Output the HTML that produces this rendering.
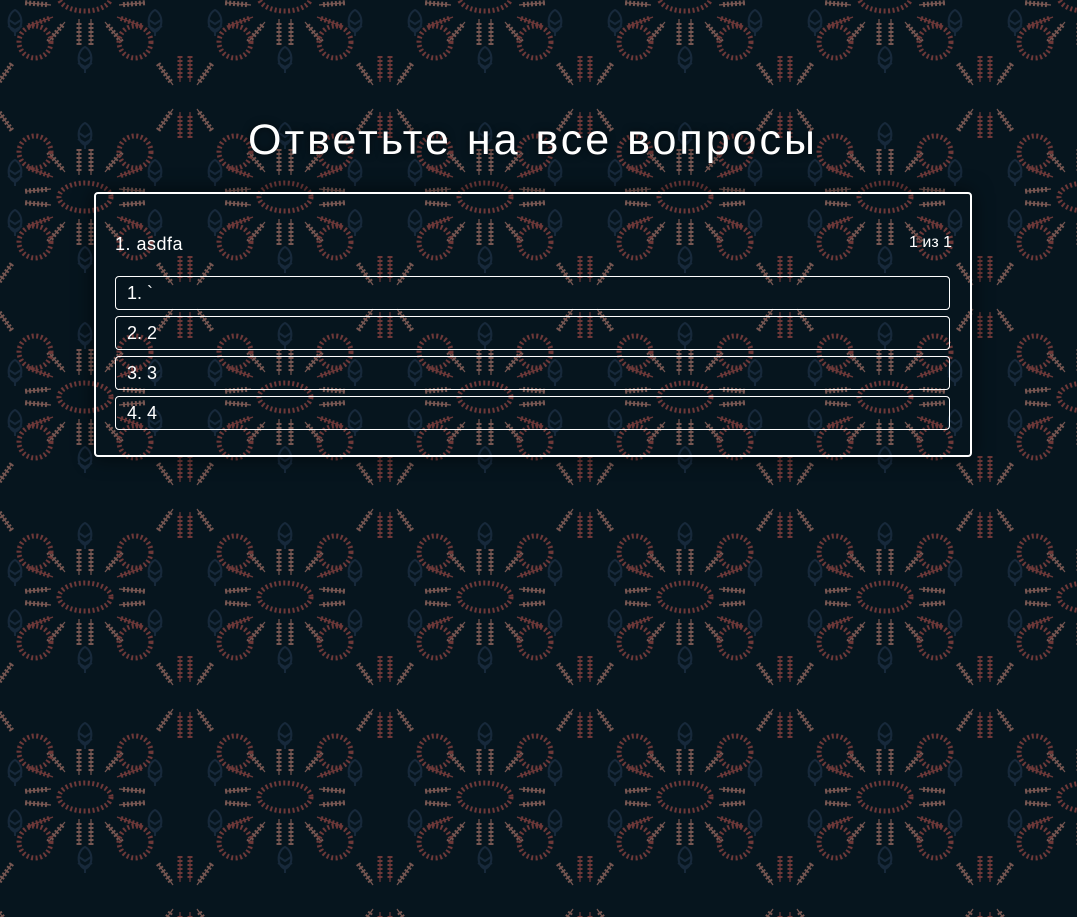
<!DOCTYPE html>
<html><head><meta charset="utf-8"><style>
html,body{margin:0;width:1077px;height:917px;overflow:hidden;background:#06151e;font-family:"Liberation Sans",sans-serif;color:#fff}
svg.bg{position:absolute;left:0;top:0}
h1{position:absolute;left:0;width:1066px;top:116px;margin:0;text-align:center;font-weight:normal;font-size:43px;letter-spacing:3px;text-shadow:0 0 8px rgba(0,0,0,.6)}
.card{position:absolute;left:94px;top:192px;width:874px;height:261px;border:2px solid #fff;border-radius:4px;box-shadow:0 0 20px rgba(0,0,0,.6)}
.q{position:absolute;left:19px;top:40px;font-size:18px;letter-spacing:.5px}
.n{position:absolute;right:18px;top:40px;font-size:16px}
.o{position:absolute;left:19px;height:32px;border:1px solid #fff;border-radius:4px;font-size:18px;line-height:32px;padding-left:11px;width:822px}
</style></head><body>
<svg class="bg" width="1077" height="917">
<defs>
<g id="w"><line x1="0" y1="0" x2="0" y2="-26" stroke-width="1.2"/><line x1="0" y1="-4" x2="0" y2="-26" stroke-width="5" stroke-dasharray="2 2"/></g>
<g id="h" fill="none" stroke="#23364d" stroke-width="2"><path d="M0,-12 C8,-8 9,6 0,10 C-9,6 -8,-8 0,-12Z M-6,-2 L0,2 L6,-2 M-7,4 L0,8 L7,4 M0,10 L0,14"/></g>
<pattern id="p" x="-15" y="97" width="200" height="200" patternUnits="userSpaceOnUse">
<rect width="200" height="200" fill="#06151e"/>
<g opacity="0.6">
<g transform="translate(100,100)">
<ellipse rx="26" ry="14" fill="none" stroke="#b24f48" stroke-width="5" stroke-dasharray="2 2.5"/>
<g stroke="#c48474"><use href="#w" transform="translate(-6,-22)"/><use href="#w" transform="translate(6,-22)"/><use href="#w" transform="translate(-6,22) rotate(180)"/><use href="#w" transform="translate(6,22) rotate(180)"/>
<use href="#w" transform="translate(-20,-25) rotate(-40)"/><use href="#w" transform="translate(20,-25) rotate(40)"/><use href="#w" transform="translate(-20,25) rotate(-140)"/><use href="#w" transform="translate(20,25) rotate(140)"/>
<use href="#w" transform="translate(-34,-8) rotate(-95)"/><use href="#w" transform="translate(34,-8) rotate(95)"/><use href="#w" transform="translate(-34,8) rotate(-85)"/><use href="#w" transform="translate(34,8) rotate(85)"/></g>
<g stroke="#b24f48"><use href="#w" transform="translate(-32,-20) rotate(-70)"/><use href="#w" transform="translate(32,-20) rotate(70)"/><use href="#w" transform="translate(-32,20) rotate(-110)"/><use href="#w" transform="translate(32,20) rotate(110)"/></g>
<use href="#h" transform="translate(0,-62)"/><use href="#h" transform="translate(0,62)"/><use href="#h" transform="translate(-70,-25)"/><use href="#h" transform="translate(70,-25)"/><use href="#h" transform="translate(-70,25)"/><use href="#h" transform="translate(70,25)"/>
</g>
<g id="c">
<g stroke="#b24f48"><use href="#w" transform="translate(-5,-15)"/><use href="#w" transform="translate(5,-15)"/><use href="#w" transform="translate(-5,15) rotate(180)"/><use href="#w" transform="translate(5,15) rotate(180)"/></g>
<g stroke="#c48474"><use href="#w" transform="translate(-12,-12) rotate(-35)"/><use href="#w" transform="translate(12,-12) rotate(35)"/><use href="#w" transform="translate(-12,12) rotate(-145)"/><use href="#w" transform="translate(12,12) rotate(145)"/></g>
<circle cx="-50" cy="-55" r="16" fill="none" stroke="#b24f48" stroke-width="5" stroke-dasharray="2 2.5"/>
<circle cx="50" cy="-55" r="16" fill="none" stroke="#b24f48" stroke-width="5" stroke-dasharray="2 2.5"/>
<circle cx="-50" cy="55" r="16" fill="none" stroke="#b24f48" stroke-width="5" stroke-dasharray="2 2.5"/>
<circle cx="50" cy="55" r="16" fill="none" stroke="#b24f48" stroke-width="5" stroke-dasharray="2 2.5"/>
</g>
<use href="#c" transform="translate(200,0)"/><use href="#c" transform="translate(0,200)"/><use href="#c" transform="translate(200,200)"/>
</g>
</pattern>
</defs>
<rect width="1077" height="917" fill="url(#p)"/>
</svg>
<h1>Ответьте на все вопросы</h1>
<div class="card">
<div class="q">1. asdfa</div>
<div class="n">1 из 1</div>
<div class="o" style="top:82px">1. `</div>
<div class="o" style="top:122px">2. 2</div>
<div class="o" style="top:162px">3. 3</div>
<div class="o" style="top:202px">4. 4</div>
</div>
</body></html>
